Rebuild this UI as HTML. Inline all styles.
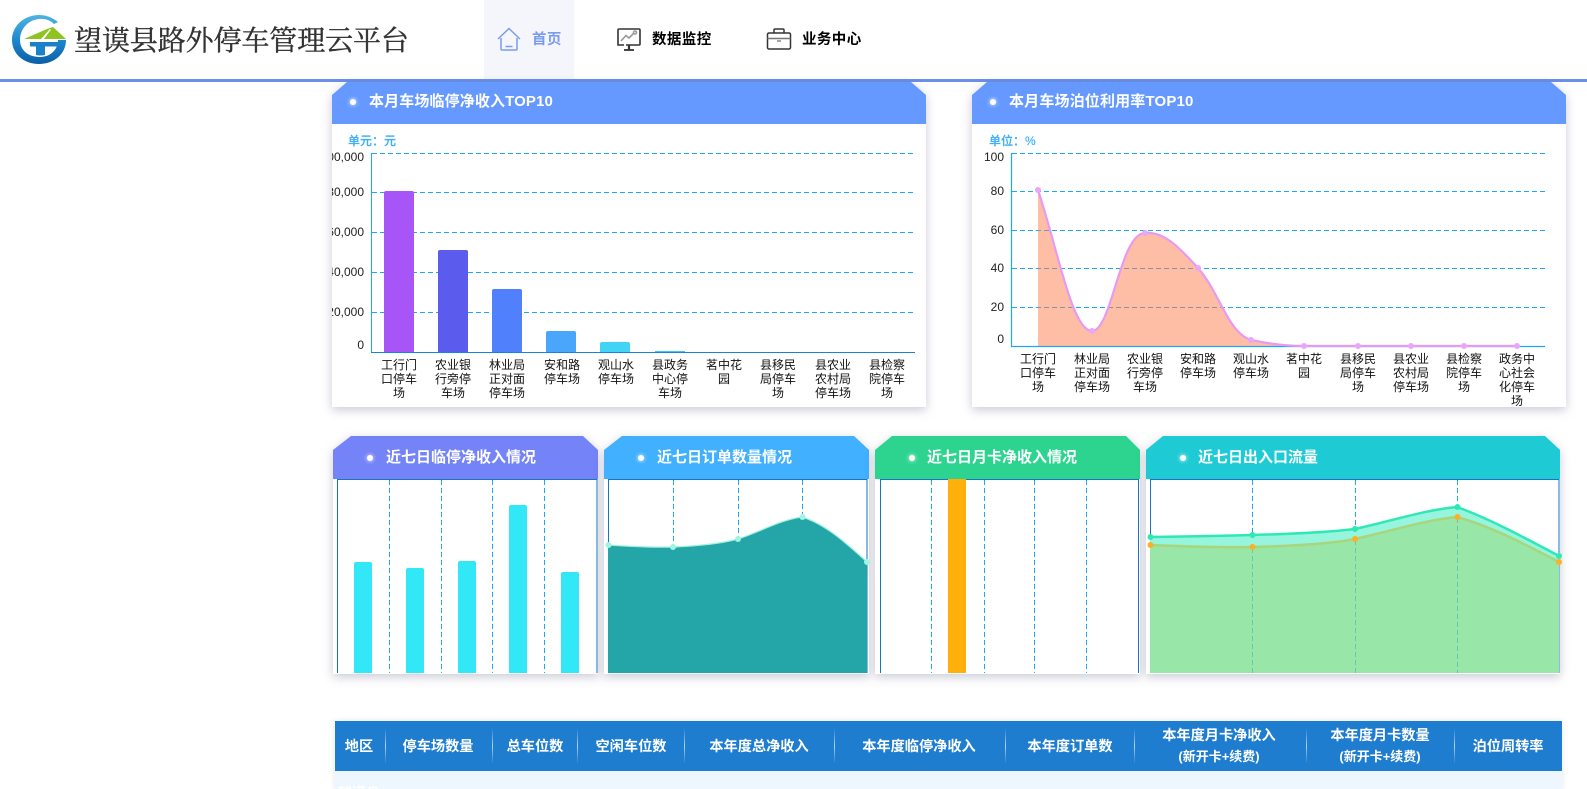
<!DOCTYPE html>
<html lang="zh"><head><meta charset="utf-8"><title>望谟县路外停车管理云平台</title>
<style>
html,body{margin:0;padding:0;width:1587px;height:789px;overflow:hidden;background:#fff}
body{position:relative;font-family:"Liberation Sans","Noto Sans CJK SC",sans-serif}
.a{position:absolute;white-space:nowrap}
.nav{font-size:14.5px;font-weight:700;line-height:20px;top:30px;color:#000;letter-spacing:.4px}
.card{position:absolute;filter:drop-shadow(0 3px 5px rgba(40,40,90,.25))}
.hd{position:absolute;left:0;top:0;right:0;color:#fff;font-weight:700;font-size:15px}
.hd i{position:absolute;width:6px;height:6px;border-radius:50%;background:#fff;box-shadow:0 0 4px #fff}
.hd span{position:absolute;white-space:nowrap;line-height:20px}
.bd{position:absolute;left:0;right:0;bottom:0;background:#fff}
.u{font-size:12px;color:#3fb1f5;line-height:14px;font-weight:500;-webkit-text-stroke:.2px #3fb1f5}
.yl{font-size:12px;color:#222;line-height:14px;text-align:right;width:50px}
.xl{position:absolute;width:54px;margin-left:-27px;text-align:center;font-size:12px;line-height:14px;color:#111;white-space:nowrap}
.th{position:absolute;color:#fff;font-weight:700;font-size:14.2px;text-align:center;white-space:nowrap;transform:translateX(-50%);line-height:18px}
.th small{font-size:13px;display:block;line-height:16px;margin-top:4px;font-weight:700}
.sep{position:absolute;width:1px;top:728px;height:36px;background:linear-gradient(to bottom,rgba(255,255,255,0),rgba(255,255,255,.65),rgba(255,255,255,0))}
</style></head><body>

<!-- top bar -->
<div class="a" style="left:484px;top:0;width:90px;height:79px;background:#f5f6fc"></div>
<div class="a" style="left:0;top:79px;width:1587px;height:3px;background:#6b90e9"></div>

<svg class="a" style="left:8px;top:10px" width="64" height="60" viewBox="8 10 64 60">
<defs><linearGradient id="lg" x1="0" y1="0" x2="0" y2="1"><stop offset="0" stop-color="#4fb4e4"/><stop offset=".55" stop-color="#1a84cc"/><stop offset="1" stop-color="#0c5fa8"/></linearGradient></defs>
<path fill="url(#lg)" d="M58 22 C51 16.500 45 15 39 15 C24 15 12 26 12 40 C12 54 24 64 39 64 C54 64 66 54 66 40 L58 40 C58 50 50 57 40 57 C28 57 20 50 20 40 C20 29 28 20 39 19 C45 18.500 50 20 54 24 Z"/>
<path fill="#8fc31f" d="M24 39 L47 29 L53 27 L66 39 Z"/>
<path fill="#fff" d="M41 39 L50 29 L51 29.500 L44 39 Z"/>
<path fill="#1a80c8" d="M30 42 L62 42 L59 46.500 L45 46.500 L45 55 Q40 56 36 55 L36 46.500 L30 46.500 Z"/>
</svg>
<div class="a" style="left:74px;top:22px;font-family:'Liberation Serif','Noto Serif CJK SC',serif;font-size:28px;line-height:40px;color:#333;letter-spacing:-.1px;width:336px;-webkit-text-stroke:.4px #333">望谟县路外停车管理云平台</div>

<svg class="a" style="left:496px;top:26px" width="26" height="26" viewBox="0 0 26 26" fill="none" stroke="#7a9bf0" stroke-width="1.500">
<path d="M2 13 L13 2.500 L24 13"/><path d="M5 12 L5 23 Q5 24 6 24 L20 24 Q21 24 21 23 L21 12"/><path d="M9.500 20.500 L16.500 20.500"/></svg>
<div class="a nav" style="left:532px;color:#7a9bf0">首页</div>

<svg class="a" style="left:615px;top:26px" width="28" height="26" viewBox="0 0 28 26" fill="none" stroke="#333" stroke-width="1.600">
<path d="M3 18 L3 4 Q3 3 4 3 L24 3 Q25 3 25 4 L25 18 Q25 19 24 19 L11 19"/><path d="M3 18 L3 19 L9 19"/><path d="M14 19 L14 24" stroke-width="2.200"/><path d="M9 24 L19 24" stroke-width="1.800"/>
<path d="M6 15 L11 9.500 L14 12 L19 7" stroke="#999"/><circle cx="20" cy="6.500" r="1.500" stroke="#999"/></svg>
<div class="a nav" style="left:652px">数据监控</div>

<svg class="a" style="left:765px;top:26px" width="28" height="25" viewBox="0 0 28 25" fill="none" stroke="#333" stroke-width="1.500">
<rect x="2.500" y="7" width="23" height="16" rx="1.500"/><path d="M9 7 L9 4 Q9 3 10 3 L18 3 Q19 3 19 4 L19 7"/><path d="M2.500 12.500 L25.500 12.500" stroke="#777"/><path d="M12 15 L16 15" stroke="#888"/></svg>
<div class="a nav" style="left:802px">业务中心</div>

<!-- card 1 -->
<div class="card" style="left:332px;top:82px;width:594px;height:325px">
 <div class="bd" style="top:20px"></div>
 <div class="hd" style="height:42px;background:#6699ff;clip-path:polygon(0 13px,15px 0,579px 0,594px 13px,594px 42px,0 42px)"><i style="left:18px;top:17px"></i><span style="left:37px;top:10px;letter-spacing:.12px">本月车场临停净收入TOP10</span></div>
</div>
<!-- card 2 -->
<div class="card" style="left:972px;top:82px;width:594px;height:325px">
 <div class="bd" style="top:20px"></div>
 <div class="hd" style="height:42px;background:#6699ff;clip-path:polygon(0 13px,15px 0,579px 0,594px 13px,594px 42px,0 42px)"><i style="left:18px;top:17px"></i><span style="left:37px;top:10px;letter-spacing:.16px">本月车场泊位利用率TOP10</span></div>
</div>

<!-- row 2 cards -->
<div class="card" style="left:333px;top:436px;width:265px;height:238px"><div class="bd" style="top:20px"></div>
 <div class="hd" style="height:43px;background:#7583f8;clip-path:polygon(0 14px,18px 0,250px 0,265px 14px,265px 43px,0 43px)"><i style="left:34px;top:19px"></i><span style="left:53px;top:12px">近七日临停净收入情况</span></div></div>
<div class="card" style="left:604px;top:436px;width:265px;height:238px"><div class="bd" style="top:20px"></div>
 <div class="hd" style="height:43px;background:#40b0ff;clip-path:polygon(0 14px,18px 0,250px 0,265px 14px,265px 43px,0 43px)"><i style="left:34px;top:19px"></i><span style="left:53px;top:12px">近七日订单数量情况</span></div></div>
<div class="card" style="left:875px;top:436px;width:265px;height:238px"><div class="bd" style="top:20px"></div>
 <div class="hd" style="height:43px;background:#2dd48f;clip-path:polygon(0 14px,17px 0,251px 0,265px 14px,265px 43px,0 43px)"><i style="left:34px;top:19px"></i><span style="left:52px;top:12px">近七日月卡净收入情况</span></div></div>
<div class="card" style="left:1146px;top:436px;width:414px;height:238px"><div class="bd" style="top:20px"></div>
 <div class="hd" style="height:43px;background:#1ecbd4;clip-path:polygon(0 14px,17px 0,399px 0,414px 14px,414px 43px,0 43px)"><i style="left:34px;top:19px"></i><span style="left:52px;top:12px">近七日出入口流量</span></div></div>

<!-- all chart graphics -->
<svg class="a" style="left:0;top:0" width="1587" height="789" viewBox="0 0 1587 789" fill="none">
 <!-- chart 1 grid -->
 <g stroke="#1aa7ff" stroke-width="1" stroke-dasharray="5 3">
  <path d="M372 153.500H916M372 192.500H916M372 232.500H916M372 272.500H916M372 312.500H916"/>
 </g>
 <path d="M371.500 153V352" stroke="#1aa7ff" stroke-width="1"/>
 <path d="M371 352.500H915" stroke="#1a84d4" stroke-width="1"/>
 <path fill="#a855f7" d="M384 193q0-2 2-2h26q2 0 2 2v159h-30z"/>
 <path fill="#5b5bee" d="M438 252q0-2 2-2h26q2 0 2 2v100h-30z"/>
 <path fill="#5080fb" d="M492 291q0-2 2-2h26q2 0 2 2v61h-30z"/>
 <path fill="#4aa6fa" d="M546 333q0-2 2-2h26q2 0 2 2v19h-30z"/>
 <path fill="#42d4f4" d="M600 344q0-2 2-2h26q2 0 2 2v8h-30z"/>
 <path fill="#43c4ee" d="M655 351h30v1h-30z"/>

 <!-- chart 2 grid -->
 <g stroke="#1aa7ff" stroke-width="1" stroke-dasharray="5 3">
  <path d="M1012 153.500H1546M1012 191.500H1546M1012 230.500H1546M1012 268.500H1546M1012 307.500H1546"/>
 </g>
 <path d="M1011.500 153V346" stroke="#1aa7ff" stroke-width="1.200"/>
 <path d="M1011 346.500H1545" stroke="#1aa7ff" stroke-width="1.200"/>
 <path fill="#fb7d4b" fill-opacity=".5" d="M1038 190C1058 250 1072 331 1092 331C1112 331 1120 233 1145 233C1166 231 1183 252 1198 268C1220 293 1228 333 1251 340C1270 344 1285 346 1304 346L1517 346L1038 346Z"/>
 <path stroke="#e89af0" stroke-width="2.200" d="M1038 190C1058 250 1072 331 1092 331C1112 331 1120 233 1145 233C1166 231 1183 252 1198 268C1220 293 1228 333 1251 340C1270 344 1285 346 1304 346L1517 346"/>
 <g fill="#eaa6fb"><circle cx="1038" cy="190" r="3"/><circle cx="1092" cy="331" r="3"/><circle cx="1145" cy="233" r="3"/><circle cx="1198" cy="268" r="3"/><circle cx="1251" cy="340" r="3"/><circle cx="1304" cy="346" r="3"/><circle cx="1358" cy="346" r="3"/><circle cx="1411" cy="346" r="3"/><circle cx="1464" cy="346" r="3"/><circle cx="1517" cy="346" r="3"/></g>

 <!-- row2 A -->
 <path d="M337.500 479V673M597 479V673M337 479.500H597" stroke="#1477c0" stroke-width="1"/>
 <g stroke="#1aa7ff" stroke-dasharray="5 3"><path d="M389.500 480V673M441.500 480V673M492.500 480V673M544.500 480V673"/></g>
 <g fill="#33e8f6">
  <path d="M354 564q0-2 2-2h14q2 0 2 2v109h-18z"/><path d="M406 570q0-2 2-2h14q2 0 2 2v103h-18z"/><path d="M458 563q0-2 2-2h14q2 0 2 2v110h-18z"/><path d="M509 507q0-2 2-2h14q2 0 2 2v166h-18z"/><path d="M561 574q0-2 2-2h14q2 0 2 2v99h-18z"/>
 </g>

 <!-- row2 B -->
 <path d="M608.500 479V673M867 479V673M608 479.500H867" stroke="#1477c0" stroke-width="1"/>
 <g stroke="#1aa7ff" stroke-dasharray="5 3"><path d="M673.500 480V548M738.500 480V540M802.500 480V518"/></g>
 <path fill="#24a5a8" d="M608 545C630 546.500 650 547.500 673 547C697 546 720 544 738 539C762 531 780 520 802 517C825 524 845 542 867 562V673H608Z"/>
 <path stroke="#9ff3dc" stroke-width="1.200" d="M608 545C630 546.500 650 547.500 673 547C697 546 720 544 738 539C762 531 780 520 802 517C825 524 845 542 867 562"/>
 <g fill="#a0f5e0"><circle cx="608.500" cy="545" r="3"/><circle cx="673" cy="547" r="3"/><circle cx="738" cy="539" r="3"/><circle cx="802.500" cy="517" r="3"/><circle cx="867" cy="562" r="3"/></g>

 <!-- row2 C -->
 <path d="M880.500 479V673M1138.500 479V673M880 479.500H1139" stroke="#1477c0" stroke-width="1"/>
 <g stroke="#1aa7ff" stroke-dasharray="5 3"><path d="M931.500 480V673M984.500 480V673M1034.500 480V673M1086.500 480V673"/></g>
 <rect x="948" y="479" width="18" height="194" fill="#ffb00a"/>

 <!-- row2 D -->
 <path d="M1150.500 479V673M1559 479V673M1150 479.500H1559" stroke="#1477c0" stroke-width="1"/>
 <g stroke="#1aa7ff" stroke-dasharray="5 3"><path d="M1252.500 480V673M1355.500 480V673M1457.500 480V673"/></g>
 <path fill="#96f5dc" d="M1150 537C1185 536.500 1220 536 1252 535C1290 534 1330 532 1355 529C1395 520 1425 510 1457 507C1490 519 1525 538 1559 556V673H1150Z" fill-opacity=".98"/>
 <path fill="#98e6a8" d="M1150 545C1185 546.500 1220 547.500 1252 547C1290 546 1330 544 1355 539C1395 530 1425 520 1457 517C1490 526 1525 544 1559 562V673H1150Z"/>
 <g stroke="#5fcbaf" stroke-dasharray="5 3"><path d="M1252.500 548V673M1355.500 540V673M1457.500 518V673"/></g>
 <path stroke="#2ee8b6" stroke-width="2.500" d="M1150 537C1185 536.500 1220 536 1252 535C1290 534 1330 532 1355 529C1395 520 1425 510 1457 507C1490 519 1525 538 1559 556"/>
 <path stroke="#a8d67c" stroke-width="2.500" d="M1150 545C1185 546.500 1220 547.500 1252 547C1290 546 1330 544 1355 539C1395 530 1425 520 1457 517C1490 526 1525 544 1559 562"/>
 <g fill="#2ee8b6"><circle cx="1150.500" cy="537" r="3"/><circle cx="1252.500" cy="535" r="3"/><circle cx="1355" cy="529" r="3"/><circle cx="1457.500" cy="507" r="3"/><circle cx="1559" cy="556" r="3"/></g>
 <g fill="#fcb026"><circle cx="1150.500" cy="545" r="3"/><circle cx="1252.500" cy="547" r="3"/><circle cx="1355" cy="539" r="3"/><circle cx="1457.500" cy="517" r="3"/><circle cx="1559" cy="562" r="3"/></g>
</svg>

<!-- chart 1 text -->
<div class="a u" style="left:348px;top:134px">单元：元</div>
<div class="a" style="left:332px;top:140px;width:33px;height:220px;overflow:hidden">
 <div class="a yl" style="left:-18px;top:10px">100,000</div>
 <div class="a yl" style="left:-18px;top:45px">80,000</div>
 <div class="a yl" style="left:-18px;top:85px">60,000</div>
 <div class="a yl" style="left:-18px;top:125px">40,000</div>
 <div class="a yl" style="left:-18px;top:165px">20,000</div>
 <div class="a yl" style="left:-18px;top:198px">0</div>
</div>
<div class="xl" style="left:399px;top:358px">工行门<br>口停车<br>场</div>
<div class="xl" style="left:453px;top:358px">农业银<br>行旁停<br>车场</div>
<div class="xl" style="left:507px;top:358px">林业局<br>正对面<br>停车场</div>
<div class="xl" style="left:562px;top:358px">安和路<br>停车场</div>
<div class="xl" style="left:616px;top:358px">观山水<br>停车场</div>
<div class="xl" style="left:670px;top:358px">县政务<br>中心停<br>车场</div>
<div class="xl" style="left:724px;top:358px">茗中花<br>园</div>
<div class="xl" style="left:778px;top:358px">县移民<br>局停车<br>场</div>
<div class="xl" style="left:833px;top:358px">县农业<br>农村局<br>停车场</div>
<div class="xl" style="left:887px;top:358px">县检察<br>院停车<br>场</div>

<!-- chart 2 text -->
<div class="a u" style="left:989px;top:134px">单位：%</div>
<div class="a yl" style="left:954px;top:150px">100</div>
<div class="a yl" style="left:954px;top:184px">80</div>
<div class="a yl" style="left:954px;top:223px">60</div>
<div class="a yl" style="left:954px;top:261px">40</div>
<div class="a yl" style="left:954px;top:300px">20</div>
<div class="a yl" style="left:954px;top:332px">0</div>
<div class="xl" style="left:1038px;top:352px">工行门<br>口停车<br>场</div>
<div class="xl" style="left:1092px;top:352px">林业局<br>正对面<br>停车场</div>
<div class="xl" style="left:1145px;top:352px">农业银<br>行旁停<br>车场</div>
<div class="xl" style="left:1198px;top:352px">安和路<br>停车场</div>
<div class="xl" style="left:1251px;top:352px">观山水<br>停车场</div>
<div class="xl" style="left:1304px;top:352px">茗中花<br>园</div>
<div class="xl" style="left:1358px;top:352px">县移民<br>局停车<br>场</div>
<div class="xl" style="left:1411px;top:352px">县农业<br>农村局<br>停车场</div>
<div class="xl" style="left:1464px;top:352px">县检察<br>院停车<br>场</div>
<div class="xl" style="left:1517px;top:352px">政务中<br>心社会<br>化停车<br>场</div>

<!-- table -->
<div class="a" style="left:335px;top:721px;width:1227px;height:68px;background:#eef6ff;box-shadow:0 0 6px rgba(40,40,90,.12)"></div>
<div class="a" style="left:335px;top:721px;width:1227px;height:50px;background:#1f7dd0"></div>
<div class="sep" style="left:385px"></div><div class="sep" style="left:492px"></div><div class="sep" style="left:577px"></div><div class="sep" style="left:684px"></div><div class="sep" style="left:834px"></div><div class="sep" style="left:1005px"></div><div class="sep" style="left:1134px"></div><div class="sep" style="left:1306px"></div><div class="sep" style="left:1454px"></div>
<div class="th" style="left:359px;top:738px">地区</div>
<div class="th" style="left:438px;top:738px">停车场数量</div>
<div class="th" style="left:535px;top:738px">总车位数</div>
<div class="th" style="left:631px;top:738px">空闲车位数</div>
<div class="th" style="left:759px;top:738px">本年度总净收入</div>
<div class="th" style="left:919px;top:738px">本年度临停净收入</div>
<div class="th" style="left:1070px;top:738px">本年度订单数</div>
<div class="th" style="left:1219px;top:727px">本年度月卡净收入<small>(新开卡+续费)</small></div>
<div class="th" style="left:1380px;top:727px">本年度月卡数量<small>(新开卡+续费)</small></div>
<div class="th" style="left:1508px;top:738px">泊位周转率</div>
<div class="a" style="left:338px;top:783px;color:#fff;font-size:14px;font-weight:700;line-height:20px">望谟县</div>
</body></html>
